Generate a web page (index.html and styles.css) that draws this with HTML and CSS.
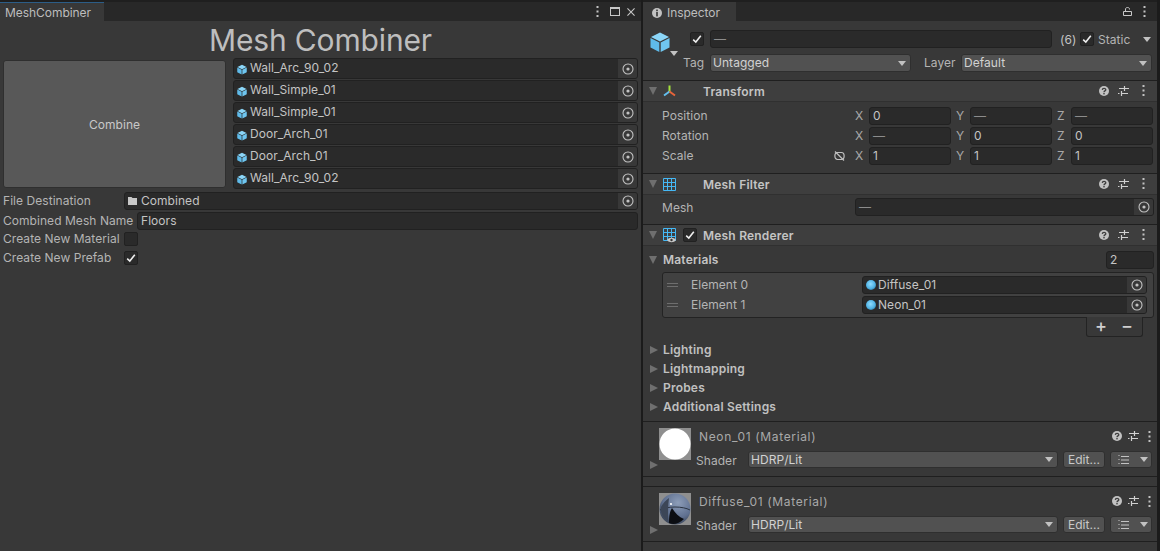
FILE: index.html
```html
<!DOCTYPE html>
<html lang="en">
<head>
<meta charset="utf-8">
<title>Mesh Combiner</title>
<link rel="stylesheet" href="styles.css">
</head>
<body>
<svg class="defs" width="0" height="0">
  <defs>
    <radialGradient id="ball" cx="0.6" cy="0.3" r="0.8"><stop offset="0" stop-color="#8d9db8"/><stop offset="0.6" stop-color="#5f7090"/><stop offset="1" stop-color="#2c3442"/></radialGradient>
    <symbol id="cube" viewBox="0 0 20 20">
      <path fill="#8bd6f8" d="M10 0.5 19 5 10 9.5 1 5Z"/>
      <path fill="#5fbbea" d="M0.5 6 9.3 10.5V20L0.5 15.5Z"/>
      <path fill="#6fc6f0" d="M19.5 6 10.7 10.5V20L19.5 15.5Z"/>
    </symbol>
    <symbol id="target" viewBox="0 0 12 12">
      <circle cx="6" cy="6" r="5" fill="none" stroke="#c2c2c2" stroke-width="1.1"/>
      <circle cx="6" cy="6" r="1.6" fill="#c2c2c2"/>
    </symbol>
    <symbol id="help" viewBox="0 0 10 10">
      <circle cx="5" cy="5" r="5" fill="#c2c2c2"/>
      <path d="M3.3 3.9C3.4 1.9 6.8 1.9 6.8 3.7 6.8 5 5 4.8 5 6.2" fill="none" stroke="#3e3e3e" stroke-width="1.3"/>
      <rect x="4.3" y="7" width="1.4" height="1.4" fill="#3e3e3e"/>
    </symbol>
    <symbol id="sliders" viewBox="0 0 11 10">
      <path d="M1 2.5H11M0 7.5H1.5M3 7.5H10" stroke="#d0d0d0" stroke-width="1" fill="none"/>
      <path d="M6.5 0V5M3.5 5V10" stroke="#d0d0d0" stroke-width="1.2" fill="none"/>
    </symbol>
    <symbol id="kebab" viewBox="0 0 3 11">
      <rect x="0.5" y="0" width="2" height="2" fill="#c2c2c2"/>
      <rect x="0.5" y="4.5" width="2" height="2" fill="#c2c2c2"/>
      <rect x="0.5" y="9" width="2" height="2" fill="#c2c2c2"/>
    </symbol>
    <symbol id="check" viewBox="0 0 10 10">
      <path d="M1.2 5.6 3.8 8 8.8 1.8" fill="none" stroke="#eeeeee" stroke-width="1.6"/>
    </symbol>
    <symbol id="stack" viewBox="0 0 11 10">
      <path d="M0 0.5H2M0 4.5H2M0 8.5H2" stroke="#8f8f8f" fill="none"/>
      <path d="M3 1.5H11M3 5H11M3 8.5H11" stroke="#c2c2c2" fill="none"/>
    </symbol>
  </defs>
</svg>

<main class="app">
  <section class="window">
    <header class="tabbar">
      <div class="tab tab-active"><span>MeshCombiner</span></div>
      <div class="tab-tools win-tools">
        <svg class="i-kebab"><use href="#kebab"/></svg>
        <span class="i-max"></span>
        <svg class="i-close" viewBox="0 0 9 9"><path d="M0.5 0.5 8.5 8.5M8.5 0.5 0.5 8.5" stroke="#c8c8c8" stroke-width="1.2"/></svg>
      </div>
    </header>
    <div class="combiner">
      <h1 class="title">Mesh Combiner</h1>
      <div class="top-row">
        <button class="combine">Combine</button>
        <ul class="mesh-list">
          <li class="objfield"><svg class="i-cube"><use href="#cube"/></svg><span class="val">Wall_Arc_90_02</span><span class="pick"><svg class="i-target"><use href="#target"/></svg></span></li>
          <li class="objfield"><svg class="i-cube"><use href="#cube"/></svg><span class="val">Wall_Simple_01</span><span class="pick"><svg class="i-target"><use href="#target"/></svg></span></li>
          <li class="objfield"><svg class="i-cube"><use href="#cube"/></svg><span class="val">Wall_Simple_01</span><span class="pick"><svg class="i-target"><use href="#target"/></svg></span></li>
          <li class="objfield"><svg class="i-cube"><use href="#cube"/></svg><span class="val">Door_Arch_01</span><span class="pick"><svg class="i-target"><use href="#target"/></svg></span></li>
          <li class="objfield"><svg class="i-cube"><use href="#cube"/></svg><span class="val">Door_Arch_01</span><span class="pick"><svg class="i-target"><use href="#target"/></svg></span></li>
          <li class="objfield"><svg class="i-cube"><use href="#cube"/></svg><span class="val">Wall_Arc_90_02</span><span class="pick"><svg class="i-target"><use href="#target"/></svg></span></li>
        </ul>
      </div>
      <div class="form-row row-dest">
        <label class="form-label">File Destination</label>
        <div class="objfield grow">
          <svg class="i-folder" viewBox="0 0 9 8"><path d="M0 0H3.5L4.5 1H9V8H0Z" fill="#c8c8c8"/></svg>
          <span class="val">Combined</span>
          <span class="pick"><svg class="i-target"><use href="#target"/></svg></span>
        </div>
      </div>
      <div class="form-row row-name">
        <label class="form-label name-label">Combined Mesh Name</label>
        <div class="field grow">Floors</div>
      </div>
      <div class="form-row row-check first-check">
        <label class="form-label">Create New Material</label>
        <span class="checkbox"></span>
      </div>
      <div class="form-row row-check">
        <label class="form-label">Create New Prefab</label>
        <span class="checkbox"><svg class="i-check"><use href="#check"/></svg></span>
      </div>
    </div>
  </section>

  <section class="inspector">
    <header class="tabbar">
      <div class="tab insp-tab">
        <svg class="i-info" viewBox="0 0 10 10"><circle cx="5" cy="5" r="5" fill="#c2c2c2"/><rect x="4.2" y="1.6" width="1.6" height="1.6" fill="#333"/><rect x="4.2" y="4" width="1.6" height="4.4" fill="#333"/></svg>
        <span>Inspector</span>
      </div>
      <div class="tab-tools insp-tools">
        <svg class="i-lock" viewBox="0 0 9 9"><path d="M0.5 4.5H8.5V8.5H0.5ZM2.5 4.5V2C2.5 0 6.5 0 6.5 2V2.5" fill="none" stroke="#c8c8c8"/></svg>
        <svg class="i-kebab"><use href="#kebab"/></svg>
      </div>
    </header>

    <div class="go-header">
      <div class="go-row1">
        <div class="go-icon"><svg class="i-bigcube"><use href="#cube"/></svg><span class="tri-down tiny"></span></div>
        <span class="checkbox"><svg class="i-check"><use href="#check"/></svg></span>
        <div class="field go-name dim">—</div>
        <span class="count">(6)</span>
        <span class="checkbox"><svg class="i-check"><use href="#check"/></svg></span>
        <span class="static">Static</span>
        <span class="tri-down"></span>
      </div>
      <div class="go-row2">
        <span class="tag-label">Tag</span>
        <div class="dropdown tag-drop"><span>Untagged</span><span class="tri-down"></span></div>
        <span class="layer-label">Layer</span>
        <div class="dropdown grow"><span>Default</span><span class="tri-down"></span></div>
      </div>
    </div>

    <div class="comp-head">
      <span class="fold-open"></span>
      <svg class="i-comp" viewBox="0 0 13 12">
        <path d="M6.5 0V6" stroke="#a5e23c" stroke-width="2"/>
        <path d="M6.5 6 1 10" stroke="#62bfee" stroke-width="2"/>
        <path d="M6.5 6 12 10" stroke="#e8643a" stroke-width="2"/>
      </svg>
      <span class="comp-check-gap"></span>
      <b class="comp-name">Transform</b>
      <svg class="i-help"><use href="#help"/></svg><svg class="i-sliders"><use href="#sliders"/></svg><svg class="i-kebab"><use href="#kebab"/></svg>
    </div>
    <div class="comp-body transform">
      <div class="vec-row"><span class="prop">Position</span>
        <div class="vec"><span class="ax">X</span><div class="field">0</div><span class="ax">Y</span><div class="field dim">—</div><span class="ax">Z</span><div class="field dim">—</div></div></div>
      <div class="vec-row"><span class="prop">Rotation</span>
        <div class="vec"><span class="ax">X</span><div class="field dim">—</div><span class="ax">Y</span><div class="field">0</div><span class="ax">Z</span><div class="field">0</div></div></div>
      <div class="vec-row"><span class="prop">Scale</span>
        <svg class="i-unlink" viewBox="0 0 12 10"><path d="M3 1.5H8C11.5 1.5 11.5 8.5 8 8.5H4C0.5 8.5 0.5 1.5 4 1.5" fill="none" stroke="#c0c0c0" stroke-width="1.2"/><path d="M1.5 0.5 10.5 9.5" stroke="#c0c0c0" stroke-width="1.2"/></svg>
        <div class="vec"><span class="ax">X</span><div class="field">1</div><span class="ax">Y</span><div class="field">1</div><span class="ax">Z</span><div class="field">1</div></div></div>
    </div>

    <div class="comp-head">
      <span class="fold-open"></span>
      <svg class="i-comp" viewBox="0 0 13 13"><path class="meshgrid" d="M0.5 0.5H12.5V12.5H0.5ZM4.5 0.5V12.5M8.5 0.5V12.5M0.5 4.5H12.5M0.5 8.5H12.5"/></svg>
      <span class="comp-check-gap"></span>
      <b class="comp-name">Mesh Filter</b>
      <svg class="i-help"><use href="#help"/></svg><svg class="i-sliders"><use href="#sliders"/></svg><svg class="i-kebab"><use href="#kebab"/></svg>
    </div>
    <div class="comp-body meshfilter">
      <span class="prop">Mesh</span>
      <div class="objfield grow plain"><span class="val dim">—</span><span class="pick"><svg class="i-target"><use href="#target"/></svg></span></div>
    </div>

    <div class="comp-head">
      <span class="fold-open"></span>
      <span class="renderer-icon"><svg class="i-comp" viewBox="0 0 13 13"><path class="meshgrid" d="M0.5 0.5H12.5V12.5H0.5ZM4.5 0.5V12.5M8.5 0.5V12.5M0.5 4.5H12.5M0.5 8.5H12.5"/></svg>
        <svg class="i-eye" viewBox="0 0 9 6"><path d="M0 3C2 0 7 0 9 3 7 6 2 6 0 3Z" fill="#c8c8c8"/><circle cx="4.5" cy="3" r="1.2" fill="#333"/></svg></span>
      <span class="checkbox"><svg class="i-check"><use href="#check"/></svg></span>
      <b class="comp-name">Mesh Renderer</b>
      <svg class="i-help"><use href="#help"/></svg><svg class="i-sliders"><use href="#sliders"/></svg><svg class="i-kebab"><use href="#kebab"/></svg>
    </div>
    <div class="comp-body renderer">
      <div class="mat-head">
        <span class="fold-open"></span><b class="mat-title">Materials</b>
        <div class="field count-field">2</div>
      </div>
      <div class="mat-list">
        <div class="mat-row"><span class="drag"></span><span class="elem">Element 0</span>
          <div class="objfield grow"><span class="mat-dot"></span><span class="val">Diffuse_01</span><span class="pick"><svg class="i-target"><use href="#target"/></svg></span></div></div>
        <div class="mat-row"><span class="drag"></span><span class="elem">Element 1</span>
          <div class="objfield grow"><span class="mat-dot"></span><span class="val">Neon_01</span><span class="pick"><svg class="i-target"><use href="#target"/></svg></span></div></div>
      </div>
      <div class="list-foot"><span class="pm">+</span><span class="pm">−</span></div>
      <div class="fold-row"><span class="fold-closed"></span><b>Lighting</b></div>
      <div class="fold-row"><span class="fold-closed"></span><b>Lightmapping</b></div>
      <div class="fold-row"><span class="fold-closed"></span><b>Probes</b></div>
      <div class="fold-row"><span class="fold-closed"></span><b>Additional Settings</b></div>
    </div>

    <div class="material">
      <span class="fold-closed mat-fold"></span>
      <div class="thumb"><svg viewBox="0 0 32 32"><rect width="32" height="32" fill="#8f8f8f"/><circle cx="16" cy="16" r="15.5" fill="#fff"/></svg></div>
      <div class="mat-main">
        <div class="mat-line1"><span class="mat-name">Neon_01 (Material)</span><svg class="i-help"><use href="#help"/></svg><svg class="i-sliders"><use href="#sliders"/></svg><svg class="i-kebab"><use href="#kebab"/></svg></div>
        <div class="mat-line2"><span class="shader">Shader</span>
          <div class="dropdown grow"><span>HDRP/Lit</span><span class="tri-down"></span></div>
          <span class="btn edit">Edit...</span>
          <span class="btn list-btn"><svg class="i-stack"><use href="#stack"/></svg><span class="tri-down"></span></span>
        </div>
      </div>
    </div>
    <div class="spacer"></div>
    <div class="material">
      <span class="fold-closed mat-fold"></span>
      <div class="thumb"><svg viewBox="0 0 32 32"><rect width="32" height="32" fill="#8f8f8f"/><circle cx="16" cy="16" r="15.5" fill="url(#ball)"/><path d="M1 17C8 13 24 13 31 17" stroke="#2b3442" fill="none"/><path d="M2 14C4 10 7 7 10 5 9 12 9 20 9 28 4 25 1 20 2 14Z" fill="#3c4657"/><path d="M10 30C10 22 11 18 13 15 16 20 20 24 25 26 20 31 14 32 10 30Z" fill="#0b0d12"/><circle cx="12" cy="11" r="1.1" fill="#fff"/></svg></div>
      <div class="mat-main">
        <div class="mat-line1"><span class="mat-name">Diffuse_01 (Material)</span><svg class="i-help"><use href="#help"/></svg><svg class="i-sliders"><use href="#sliders"/></svg><svg class="i-kebab"><use href="#kebab"/></svg></div>
        <div class="mat-line2"><span class="shader">Shader</span>
          <div class="dropdown grow"><span>HDRP/Lit</span><span class="tri-down"></span></div>
          <span class="btn edit">Edit...</span>
          <span class="btn list-btn"><svg class="i-stack"><use href="#stack"/></svg><span class="tri-down"></span></span>
        </div>
      </div>
    </div>
    <div class="spacer end"></div>
  </section>
</main>
</body>
</html>
```

FILE: styles.css
```css
* { box-sizing: border-box; margin: 0; padding: 0; }
html, body { width: 1160px; height: 551px; overflow: hidden; }
body { background: #1b1b1b; font: 12px/16px Inter, "Liberation Sans", sans-serif; color: #c4c4c4; letter-spacing: 0.05px; }
.defs { position: absolute; }
svg { display: block; flex: none; }
ul { list-style: none; }
b { font-weight: 600; letter-spacing: 0.2px; }
.grow { flex: 1; min-width: 0; }
.dim { color: #8c8c8c; }

.app { display: flex; height: 551px; }
.window { width: 641px; background: #383838; }
.inspector { width: 514px; margin-left: 2px; background: #383838; display: flex; flex-direction: column; }

.tabbar { height: 21px; background: #282828; border-top: 2px solid #1f1f1f; display: flex; align-items: stretch; justify-content: space-between; }
.tab { background: #383838; display: flex; align-items: center; color: #bdbdbd; letter-spacing: -0.05px; padding-top: 3px; }
.tab-active { width: 104px; border-top: 1px solid #2c5d87; padding-left: 5px; padding-top: 2px; }
.tab-tools { display: flex; align-items: center; }
.win-tools { padding-right: 6px; }
.win-tools .i-max { margin-left: 11px; margin-right: 7px; }
.i-kebab { width: 3px; height: 11px; }
.i-max { width: 10px; height: 9px; border: 1px solid #c8c8c8; border-top-width: 2px; }
.i-close { width: 8px; height: 8px; }

.title { height: 39px; font-size: 30px; line-height: 38px; font-weight: 400; text-align: center; color: #bebebe; letter-spacing: -0.15px; }
.top-row { display: flex; height: 130px; padding-left: 3px; margin-top: -1px; }
.combine { width: 223px; height: 128px; margin-top: 1px; padding-top: 2px; background: #585858; border: 1px solid #2f2f2f; border-radius: 3px; color: #c8c8c8; font: inherit; letter-spacing: 0.05px; }
.mesh-list { margin-left: 7px; margin-top: -1px; width: 405px; height: 131px; display: flex; flex-direction: column; gap: 1px; }
.mesh-list .val { padding-bottom: 2px; }

.objfield { height: 21px; display: flex; align-items: center; background: #2a2a2a; border: 1px solid #212121; border-radius: 3px; padding-left: 3px; overflow: hidden; }
.objfield .val { flex: 1; min-width: 0; }
.i-cube { width: 10px; height: 11px; margin-right: 3px; margin-top: 1px; }
.pick { width: 19px; height: 100%; background: #383838; display: flex; align-items: center; justify-content: center; }
.i-target { width: 12px; height: 12px; }
.i-folder { width: 9px; height: 8px; margin-right: 4px; }

.form-row { display: flex; align-items: center; padding-left: 3px; padding-right: 3px; }
.form-label { width: 121px; color: #b4b4b4; flex: none; }
.name-label { width: 134px; }
.row-dest { height: 19px; margin-top: 2px; }
.row-dest .objfield { height: 18px; }
.row-name { height: 18px; margin-top: 2px; }
.field { height: 18px; background: #2a2a2a; border: 1px solid #212121; border-radius: 3px; padding-left: 3px; line-height: 16px; }
.row-check { height: 19px; }
.first-check { margin-top: -1px; }
.checkbox { width: 14px; height: 14px; flex: none; background: #2a2a2a; border: 1px solid #212121; border-radius: 2px; display: flex; align-items: center; justify-content: center; }
.i-check { width: 10px; height: 10px; }

.insp-tab { width: 93px; gap: 5px; padding-left: 9px; }
.i-info { width: 10px; height: 10px; }
.insp-tools { padding-right: 11px; gap: 11px; }
.i-lock { width: 9px; height: 9px; }

.go-header { height: 60px; border-bottom: 1px solid #1f1f1f; padding: 9px 5px 0 7px; }
.go-row1 { height: 18px; display: flex; align-items: center; }
.go-icon { width: 40px; height: 18px; position: relative; flex: none; }
.i-bigcube { width: 20px; height: 20px; position: absolute; left: 0; top: 2px; }
.go-icon .tiny { position: absolute; left: 20px; top: 21px; }
.go-name { width: 342px; margin: 0 8px 0 6px; flex: none; }
.count { width: 20px; flex: none; padding-top: 1px; }
.static { width: 45px; flex: none; margin-left: 4px; padding-top: 2px; color: #b4b4b4; }
.tri-down { width: 0; height: 0; border-left: 4px solid transparent; border-right: 4px solid transparent; border-top: 5px solid #c2c2c2; flex: none; }
.go-row2 { height: 18px; margin-top: 6px; display: flex; align-items: center; padding-left: 33px; }
.tag-label { width: 27px; color: #b4b4b4; flex: none; }
.layer-label { margin-left: 13px; width: 37px; color: #b4b4b4; flex: none; }
.dropdown { height: 17px; background: #515151; border: 1px solid #2f2f2f; border-radius: 3px; display: flex; align-items: center; justify-content: space-between; padding: 0 4px 0 2px; color: #d2d2d2; }
.go-row2 .dropdown { height: 18px; }
.tag-drop { width: 201px; flex: none; }

.comp-head { height: 21px; background: #3e3e3e; border-bottom: 1px solid #303030; display: flex; align-items: center; padding: 0 5px 0 6px; }
.fold-open { width: 0; height: 0; border-left: 4.5px solid transparent; border-right: 4.5px solid transparent; border-top: 8px solid #6f6f6f; flex: none; }
.fold-closed { width: 0; height: 0; border-top: 4.5px solid transparent; border-bottom: 4.5px solid transparent; border-left: 8px solid #6f6f6f; flex: none; }
.i-comp { width: 13px; height: 13px; margin-left: 6px; margin-top: 1px; }
.meshgrid { fill: none; stroke: #45b8f5; stroke-width: 1; }
.comp-check-gap { width: 20px; flex: none; }
.comp-head .checkbox { margin-left: 7px; }
.comp-name { flex: 1; margin-left: 7px; padding-top: 2px; color: #c4c4c4; }
.comp-head .checkbox + .comp-name { margin-left: 6px; }
.i-help { width: 10px; height: 10px; }
.i-sliders { width: 11px; height: 10px; margin-left: 9px; }
.comp-head .i-kebab { margin-left: 13px; margin-right: 7px; }
.renderer-icon { display: block; position: relative; width: 19px; height: 14px; flex: none; }
.renderer-icon .i-comp { margin-top: 0; }
.i-eye { width: 9px; height: 6px; position: absolute; left: 10px; top: 9px; }

.comp-body { border-bottom: 1px solid #1f1f1f; }
.transform { height: 72px; padding-top: 4px; }
.vec-row { height: 20px; display: flex; align-items: center; padding-left: 19px; position: relative; }
.prop { width: 193px; color: #b4b4b4; flex: none; }
.vec { display: flex; align-items: center; }
.ax { width: 14px; color: #a8a8a8; flex: none; }
.vec .field { width: 82px; margin-right: 5px; }
.i-unlink { position: absolute; left: 190px; top: 5px; width: 13px; height: 10px; }

.meshfilter { height: 30px; padding: 3px 3px 0 19px; display: flex; align-items: flex-start; }
.meshfilter .prop { line-height: 18px; padding-top: 1px; }
.plain { height: 18px; }
.meshfilter .pick { height: 18px; }

.renderer { height: 177px; padding-top: 5px; }
.mat-head { height: 18px; display: flex; align-items: center; padding: 0 3px 0 6px; }
.mat-title { flex: 1; margin-left: 6px; }
.count-field { width: 48px; flex: none; }
.mat-list { margin: 3px 3px 0 19px; height: 46px; background: #414141; border: 1px solid #232323; border-radius: 3px; padding: 3px 6px 0 4px; display: flex; flex-direction: column; gap: 2px; }
.mat-row { height: 18px; display: flex; align-items: center; }
.drag { width: 11px; height: 4px; border-top: 1px solid #6e6e6e; border-bottom: 1px solid #6e6e6e; flex: none; }
.elem { width: 184px; padding-left: 13px; flex: none; color: #b4b4b4; }
.mat-row .objfield { height: 18px; }
.mat-dot { width: 10px; height: 10px; border-radius: 50%; background: radial-gradient(circle at 45% 40%, #8fdcff, #4fb2e4 55%, #1d3f55); margin-right: 2px; flex: none; }
.list-foot { margin: -1px 0 0 443px; width: 57px; height: 20px; background: #383838; border: 1px solid #232323; border-top: 0; border-radius: 0 0 3px 3px; display: flex; align-items: center; gap: 14px; padding-left: 8px; color: #cfcfcf; font-size: 18px; font-weight: 500; letter-spacing: 0; position: relative; }
.fold-row { height: 19px; display: flex; align-items: center; padding-left: 7px; gap: 5px; color: #c0c0c0; }
.list-foot + .fold-row { margin-top: 4px; }

.material { height: 55px; display: flex; padding: 6px 5px 0 16px; border-bottom: 1px solid #1f1f1f; position: relative; background: #383838; }
.thumb { width: 32px; height: 32px; flex: none; }
.mat-fold { position: absolute; left: 7px; top: 39px; }
.mat-main { flex: 1; min-width: 0; margin-left: 5px; }
.mat-line1 { height: 16px; display: flex; align-items: center; padding-left: 3px; margin-bottom: 7px; }
.mat-name { flex: 1; color: #a9a9a9; letter-spacing: 0.65px; padding-top: 1px; }
.mat-line1 .i-sliders { margin-left: 6px; }
.mat-line1 .i-kebab { margin-left: 9px; margin-right: 1px; }
.mat-line2 { height: 17px; display: flex; align-items: center; }
.shader { width: 52px; color: #b4b4b4; flex: none; padding-top: 2px; }
.btn { height: 17px; flex: none; background: #515151; border: 1px solid #2f2f2f; border-radius: 3px; display: flex; align-items: center; justify-content: center; margin-left: 5px; color: #c8c8c8; }
.edit { width: 42px; }
.list-btn { width: 42px; gap: 11px; padding-left: 3px; }
.i-stack { width: 11px; height: 10px; }
.spacer { height: 10px; background: #383838; border-bottom: 1px solid #1f1f1f; }
.spacer.end { height: 9px; border-bottom: 0; }
```
